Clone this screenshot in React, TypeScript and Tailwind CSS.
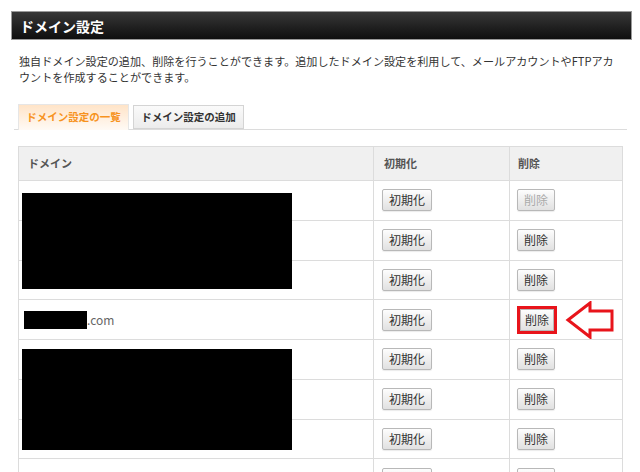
import React from "react";

const Btn = ({ label, disabled }: { label: string; disabled?: boolean }) => (
  <button
    className={`h-[22px] px-[6px] border border-[#b8b8b8] rounded-[2px] bg-linear-to-b from-[#fdfdfd] to-[#e1e1e1] text-[12px] leading-none shadow-[0_1px_1px_rgba(0,0,0,0.08)] ${
      disabled ? "text-[#aaa]" : "text-[#333]"
    }`}
  >
    {label}
  </button>
);

type Row = { domain?: "com"; delDisabled?: boolean; highlight?: boolean };

const rows: Row[] = [
  { delDisabled: true },
  {},
  {},
  { domain: "com", highlight: true },
  {},
  {},
  {},
  {},
];

export default function App() {
  return (
    <div className="relative w-[640px] h-[472px] overflow-hidden bg-white font-['Noto_Sans_CJK_JP','Noto_Sans',sans-serif] text-[#333]">
      <div className="pt-[11px] pl-[11px]">
        <div className="w-[621px] h-[29px] border border-[#9a9a9a] bg-linear-to-b from-[#383838] to-[#0f0f0f] flex items-center pl-[8px]">
          <span className="text-white font-bold text-[14px] leading-none">ドメイン設定</span>
        </div>
      </div>

      <div className="pl-[19px] pt-[13px] text-[11.1px] leading-[16px] text-[#333] whitespace-nowrap">
        <div>独自ドメイン設定の追加、削除を行うことができます。追加したドメイン設定を利用して、メールアカウントやFTPアカ</div>
        <div>ウントを作成することができます。</div>
      </div>

      <div className="ml-[14px] mt-[19px] w-[613px] border-b border-[#dcdcdc] flex items-end pl-[4px]">
        <div className="w-[111px] h-[26px] border border-b-0 border-[#e6e6e6] bg-linear-to-b from-[#ffe4c8] to-[#fffaf5] flex items-center justify-center -mb-px bg-clip-padding">
          <span className="text-[#f7931e] font-bold text-[10.5px] leading-none">ドメイン設定の一覧</span>
        </div>
        <div className="ml-[4px] w-[111px] h-[24px] border border-[#d4d4d4] bg-linear-to-b from-[#fafafa] to-[#ececec] flex items-center justify-center">
          <span className="text-[#333] font-bold text-[10.5px] leading-none">ドメイン設定の追加</span>
        </div>
      </div>

      <div className="ml-[18px] mt-[16px] w-[605px] border-l border-r border-t border-[#dcdcdc]">
        <div className="grid grid-cols-[355px_136px_112px] h-[34px] bg-[#f0f0f0] border-b border-[#dcdcdc] text-[11px] font-bold text-[#555]">
          <div className="border-r border-[#dcdcdc] flex items-center pl-[9px]">ドメイン</div>
          <div className="border-r border-[#dcdcdc] flex items-center pl-[10px]">初期化</div>
          <div className="flex items-center pl-[8px]">削除</div>
        </div>
        {rows.map((r, i) => (
          <div key={i} className="grid grid-cols-[355px_136px_112px] h-[39.75px] border-b border-[#dcdcdc]">
            <div className="border-r border-[#dcdcdc] flex items-center pl-[5px]">
              {r.domain === "com" && (
                <span className="flex items-center text-[12px] text-[#666]">
                  <span className="inline-block w-[63px] h-[18px] bg-black" />
                  <span>.com</span>
                </span>
              )}
            </div>
            <div className="border-r border-[#dcdcdc] flex items-center pl-[8px]">
              <Btn label="初期化" />
            </div>
            <div className="flex items-center pl-[7px]">
              {r.highlight ? (
                <span className="inline-flex border-[3px] border-[#e8141b]">
                  <button className="h-[22px] px-[4px] border border-[#b8b8b8] bg-linear-to-b from-[#fdfdfd] to-[#e1e1e1] text-[12px] leading-none text-[#333]">
                    削除
                  </button>
                </span>
              ) : (
                <Btn label="削除" disabled={r.delDisabled} />
              )}
            </div>
          </div>
        ))}
      </div>

      {/* redactions */}
      <div className="absolute left-[22px] top-[193px] w-[270px] h-[96px] bg-black" />
      <div className="absolute left-[22px] top-[349px] w-[270px] h-[101px] bg-black" />

      {/* arrow */}
      <svg className="absolute left-[565px] top-[301px]" width="50" height="38" viewBox="0 0 50 38">
        <polygon
          points="3,19 25,2 25,10 47,10 47,29 25,29 25,36"
          fill="white"
          stroke="#e8141b"
          strokeWidth="3"
          strokeLinejoin="miter"
        />
      </svg>
    </div>
  );
}
